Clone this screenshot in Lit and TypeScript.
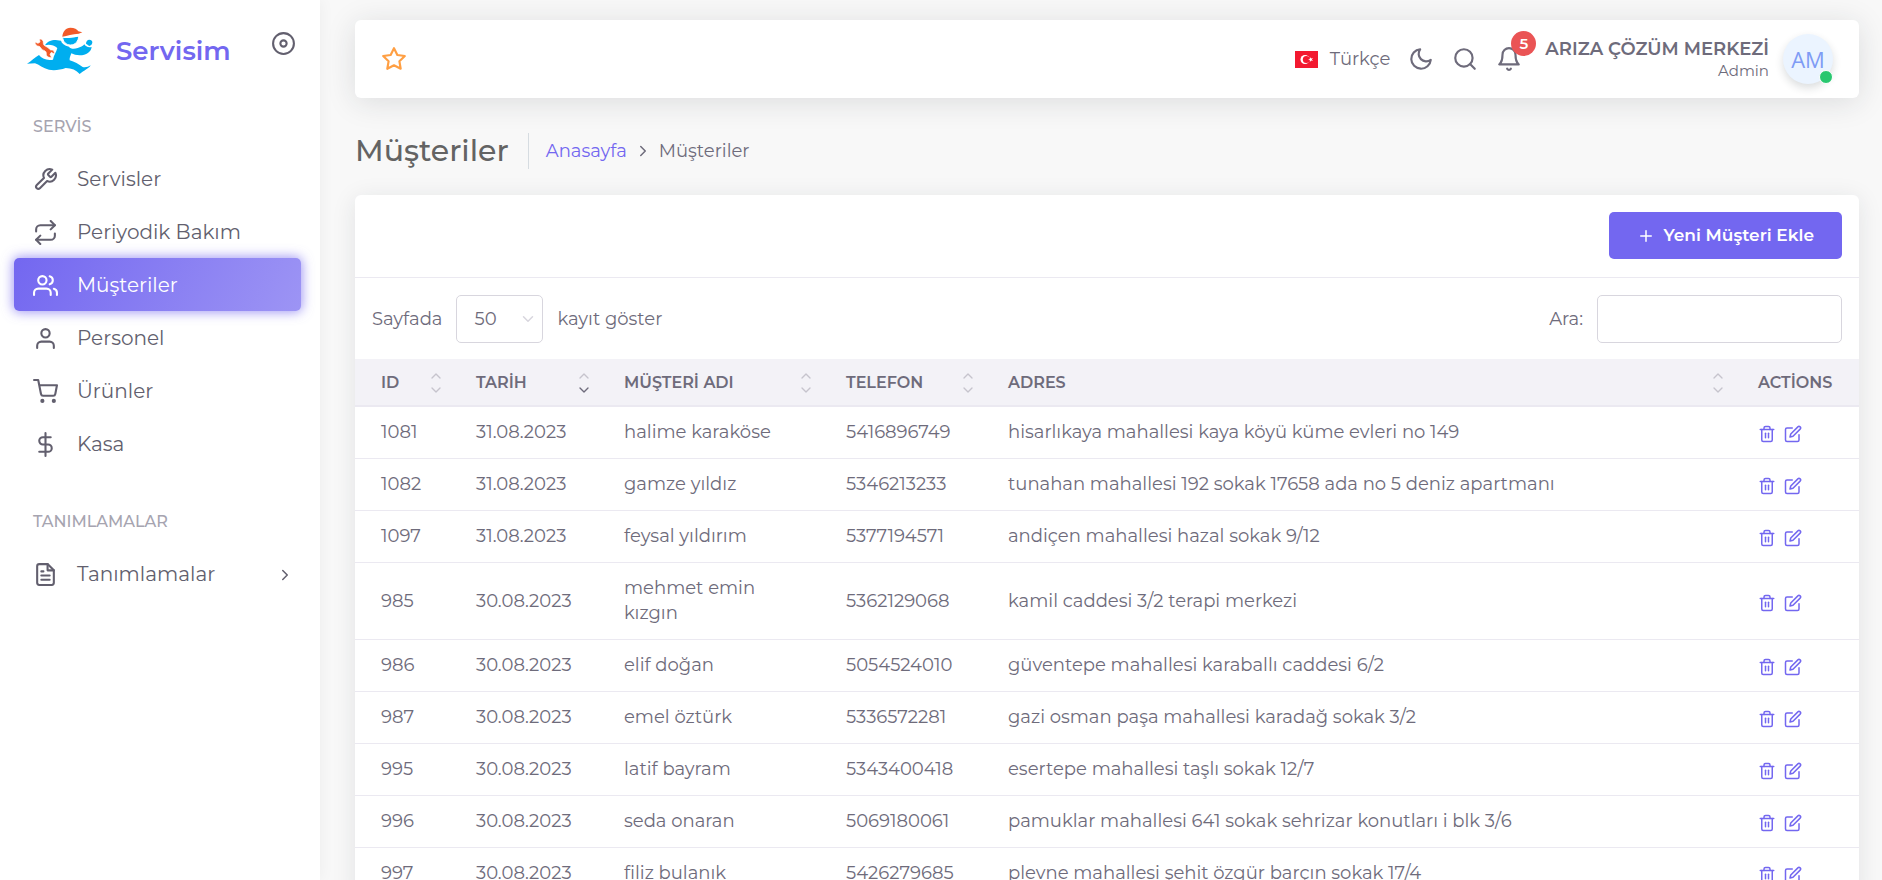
import { LitElement, html, css, svg } from "lit";
import { customElement, property, state } from "lit/decorators.js";
import { classMap } from "lit/directives/class-map.js";

const ICONS: Record<string, unknown> = {
  tool: svg`<path d="M14.7 6.3a1 1 0 0 0 0 1.4l1.6 1.6a1 1 0 0 0 1.4 0l3.77-3.77a6 6 0 0 1-7.94 7.94l-6.91 6.91a2.12 2.12 0 0 1-3-3l6.91-6.91a6 6 0 0 1 7.94-7.94l-3.76 3.76z"/>`,
  repeat: svg`<polyline points="17 1 21 5 17 9"/><path d="M3 11V9a4 4 0 0 1 4-4h14"/><polyline points="7 23 3 19 7 15"/><path d="M21 13v2a4 4 0 0 1-4 4H3"/>`,
  users: svg`<path d="M17 21v-2a4 4 0 0 0-4-4H5a4 4 0 0 0-4 4v2"/><circle cx="9" cy="7" r="4"/><path d="M23 21v-2a4 4 0 0 0-3-3.87"/><path d="M16 3.13a4 4 0 0 1 0 7.75"/>`,
  user: svg`<path d="M20 21v-2a4 4 0 0 0-4-4H8a4 4 0 0 0-4 4v2"/><circle cx="12" cy="7" r="4"/>`,
  cart: svg`<circle cx="9" cy="21" r="1"/><circle cx="20" cy="21" r="1"/><path d="M1 1h4l2.68 13.39a2 2 0 0 0 2 1.61h9.72a2 2 0 0 0 2-1.61L23 6H6"/>`,
  dollar: svg`<line x1="12" y1="1" x2="12" y2="23"/><path d="M17 5H9.5a3.5 3.5 0 0 0 0 7h5a3.5 3.5 0 0 1 0 7H6"/>`,
  file: svg`<path d="M14 2H6a2 2 0 0 0-2 2v16a2 2 0 0 0 2 2h12a2 2 0 0 0 2-2V8z"/><polyline points="14 2 14 8 20 8"/><line x1="16" y1="13" x2="8" y2="13"/><line x1="16" y1="17" x2="8" y2="17"/><polyline points="10 9 9 9 8 9"/>`,
  right: svg`<polyline points="9 18 15 12 9 6"/>`,
  down: svg`<polyline points="6 9 12 15 18 9"/>`,
  up: svg`<polyline points="18 15 12 9 6 15"/>`,
  disc: svg`<circle cx="12" cy="12" r="10"/><circle cx="12" cy="12" r="3"/>`,
  star: svg`<polygon points="12 2 15.09 8.26 22 9.27 17 14.14 18.18 21.02 12 17.77 5.82 21.02 7 14.14 2 9.27 8.91 8.26 12 2"/>`,
  moon: svg`<path d="M21 12.79A9 9 0 1 1 11.21 3 7 7 0 0 0 21 12.79z"/>`,
  search: svg`<circle cx="11" cy="11" r="8"/><line x1="21" y1="21" x2="16.65" y2="16.65"/>`,
  bell: svg`<path d="M18 8A6 6 0 0 0 6 8c0 7-3 9-3 9h18s-3-2-3-9"/><path d="M13.73 21a2 2 0 0 1-3.46 0"/>`,
  plus: svg`<line x1="12" y1="5" x2="12" y2="19"/><line x1="5" y1="12" x2="19" y2="12"/>`,
  trash: svg`<polyline points="3 6 5 6 21 6"/><path d="M19 6v14a2 2 0 0 1-2 2H7a2 2 0 0 1-2-2V6m3 0V4a2 2 0 0 1 2-2h4a2 2 0 0 1 2 2v2"/><line x1="10" y1="11" x2="10" y2="17"/><line x1="14" y1="11" x2="14" y2="17"/>`,
  edit: svg`<path d="M11 4H4a2 2 0 0 0-2 2v14a2 2 0 0 0 2 2h14a2 2 0 0 0 2-2v-7"/><path d="M18.5 2.5a2.121 2.121 0 0 1 3 3L12 15l-4 1 1-4 9.5-9.5z"/>`,
};

const icon = (name: string, size: number) => html`<svg
  class="icon" width=${size} height=${size} viewBox="0 0 24 24" fill="none"
  stroke="currentColor" stroke-width="2" stroke-linecap="round" stroke-linejoin="round"
  aria-hidden="true">${ICONS[name]}</svg>`;

const reset = css`
  *, *::before, *::after { box-sizing: border-box; }
  .icon { display: block; flex: none; }
  a { color: inherit; text-decoration: none; }
  button { font: inherit; color: inherit; background: none; border: 0; padding: 0; cursor: pointer; }
`;

@customElement("side-menu")
class SideMenu extends LitElement {
  static styles = [reset, css`
    :host {
      display: block; flex: none; width: 320px; background: #fff; color: #625f6e;
      box-shadow: 0 0 15px rgba(34, 41, 47, 0.05); z-index: 1;
    }
    .brand { display: flex; align-items: center; padding: 27px 24px 0 27px; }
    .brand-link { display: flex; align-items: center; gap: 23px; }
    .brand-name { font-size: 26px; line-height: 48px; font-weight: 600; color: #7367f0; }
    .toggle { margin: 0 0 16px auto; }
    .heading {
      margin: 41px 33px 14px; font-size: 16px; line-height: 22px; font-weight: 500; color: #a6a4b0;
    }
    .list { list-style: none; margin: 0; padding: 0 19px 0 14px; }
    .item {
      display: flex; align-items: center; gap: 19px; height: 53px; padding: 0 7px 0 19px;
      border-radius: 5px; font-size: 20px; line-height: 28px;
    }
    .item .icon { margin-top: 2px; }
    .label { flex: 1; }
    .active {
      color: #fff;
      background: linear-gradient(118deg, #7367f0, rgba(115, 103, 240, 0.7));
      box-shadow: 0 0 12px 1px rgba(115, 103, 240, 0.7);
    }
  `];

  @property({ attribute: false }) groups: { title: string; items: { icon: string; label: string; sub?: boolean }[] }[] = [
    {
      title: "SERVİS",
      items: [
        { icon: "tool", label: "Servisler" },
        { icon: "repeat", label: "Periyodik Bakım" },
        { icon: "users", label: "Müşteriler" },
        { icon: "user", label: "Personel" },
        { icon: "cart", label: "Ürünler" },
        { icon: "dollar", label: "Kasa" },
      ],
    },
    { title: "TANIMLAMALAR", items: [{ icon: "file", label: "Tanımlamalar", sub: true }] },
  ];

  @state() active = "Müşteriler";

  render() {
    return html`
      <div class="brand">
        <a class="brand-link" href="#">
          <svg width="66" height="48" viewBox="80 83 198 144" aria-hidden="true">
            <g fill="#00aeef">
              <path d="M134 138C140 127 152 122 166 122L182 124C184 132 192 138 206 142C210 149 222 150 232 146C240 144 248 140 252 135C256 141 262 145 274 143C272 158 258 168 238 168C228 168 220 165 213 162C210 170 207 176 208 183C222 186 236 196 247 203C255 206 264 202 271 198C268 206 250 214 238 224C228 212 214 206 196 206C180 212 160 214 146 211C128 207 116 196 104 192L80 193C92 186 104 174 116 167C124 178 138 184 158 181C160 168 168 158 171 146C160 138 148 134 134 138Z"/>
              <path d="M257 133c0-7 4-12 10-12 7 0 11 6 8 12-2 4-5 6-9 7-3-4-6-5-9-7z"/>
            </g>
            <path fill="#00aeef" stroke="#fff" stroke-width="3" d="M187 112c0 15 10 25 24 25s24-12 24-27c-14 4-32 3-48 2z"/>
            <path fill="#fff" d="M188 113c15 0 32-3 45-7l2 4c-14 5-31 7-46 6z"/>
            <path fill="#f15a29" d="M186 112c1-15 10-27 24-27 12 0 21 5 24 11l12 3-11 4c-19 1-34 6-49 9z"/>
            <path fill="#f15a29" stroke="#fff" stroke-width="2" d="M117 119c8-1 13 5 12 13 0 6 5 8 11 11 8 4 8 10 13 9 7-1 10 6 9 12l-9-5-4 6 5 10c-10 0-17-4-16-13 0-7-6-8-12-11-6-4-5-9-10-10-7-1-12-5-12-13l9 4 6-4z"/>
          </svg>
          <span class="brand-name">Servisim</span>
        </a>
        <button class="toggle" aria-label="Menüyü sabitle">${icon("disc", 25)}</button>
      </div>
      ${this.groups.map((g) => html`
        <div class="heading">${g.title}</div>
        <ul class="list">
          ${g.items.map((i) => html`<li>
            <a class=${classMap({ item: true, active: i.label === this.active })} href="#"
              @click=${() => (this.active = i.label)}>
              ${icon(i.icon, 25)}<span class="label">${i.label}</span>${i.sub ? icon("right", 18) : ""}
            </a>
          </li>`)}
        </ul>`)}
    `;
  }
}

@customElement("top-bar")
class TopBar extends LitElement {
  static styles = [reset, css`
    :host {
      display: flex; align-items: center; justify-content: space-between; height: 78px;
      padding: 0 26px; background: #fff; color: #6e6b7b; border-radius: 6px;
      box-shadow: 0 4px 30px rgba(34, 41, 47, 0.13);
    }
    .star { color: #ff9f43; }
    .tools { display: flex; align-items: center; gap: 18px; }
    .lang { display: flex; align-items: center; gap: 12px; font-size: 18px; line-height: 24px; }
    .bell { position: relative; margin-right: 5px; }
    .badge {
      position: absolute; top: -15px; right: -14px; width: 25px; height: 25px; border-radius: 50%;
      background: #ea5455; color: #fff; font-size: 15px; line-height: 25px; font-weight: 600; text-align: center;
    }
    .account { display: flex; align-items: center; gap: 14px; }
    .who { display: flex; flex-direction: column; align-items: flex-end; gap: 3px; }
    .name { font-size: 18px; line-height: 20px; font-weight: 600; }
    .role { font-size: 15px; line-height: 18px; }
    .avatar {
      position: relative; width: 50px; height: 50px; border-radius: 50%; background: #ebf4ff; color: #7f9cf5;
      font: 22px/50px "Open Sans", sans-serif; text-align: center;
      box-shadow: 0 4px 8px rgba(34, 41, 47, 0.16);
    }
    .status {
      position: absolute; right: 0; bottom: 0; width: 14px; height: 14px; border-radius: 50%;
      background: #28c76f; border: 1px solid #fff;
    }
  `];

  render() {
    return html`
      <button class="star" aria-label="Yer imi">${icon("star", 26)}</button>
      <div class="tools">
        <button class="lang">
          <svg width="23" height="17" viewBox="0 0 23 17" aria-hidden="true">
            <rect width="23" height="17" fill="#f31930"/>
            <circle cx="10" cy="8.5" r="4.5" fill="#fff"/>
            <circle cx="11.3" cy="8.5" r="3.5" fill="#f31930"/>
            <path fill="#fff" d="M13 8.5l1.9-.6v-2l1.2 1.6 1.9-.6-1.2 1.6 1.2 1.6-1.9-.6-1.2 1.6v-2z"/>
          </svg>
          Türkçe
        </button>
        <button aria-label="Karanlık tema">${icon("moon", 26)}</button>
        <button aria-label="Arama">${icon("search", 26)}</button>
        <button class="bell" aria-label="Bildirimler">${icon("bell", 26)}<span class="badge">5</span></button>
        <a class="account" href="#">
          <span class="who"><span class="name">ARIZA ÇÖZÜM MERKEZİ</span><span class="role">Admin</span></span>
          <span class="avatar">AM<span class="status"></span></span>
        </a>
      </div>
    `;
  }
}

type Row = [string, string, string, string, string];

@customElement("customer-table")
class CustomerTable extends LitElement {
  static styles = [reset, css`
    :host {
      display: block; background: #fff; color: #6e6b7b; border-radius: 6px; font-size: 18px; line-height: 25px;
      box-shadow: 0 4px 24px rgba(34, 41, 47, 0.1);
    }
    .head { display: flex; justify-content: flex-end; padding: 17px 17px 18px; border-bottom: 1px solid #ebe9f1; }
    .add {
      display: flex; align-items: center; gap: 9px; height: 47px; padding: 0 28px; border-radius: 5px;
      background: #7367f0; color: #fff; font-size: 17px; font-weight: 600;
    }
    .controls { display: flex; align-items: center; justify-content: space-between; padding: 17px 17px 16px; }
    .field { display: flex; align-items: center; gap: 14px; }
    .pick { display: grid; align-items: center; }
    .pick > * { grid-area: 1 / 1; }
    .pick .icon { justify-self: end; margin-right: 6px; color: #d8d6de; pointer-events: none; }
    .select, .search {
      height: 48px; font: inherit; color: inherit; background: #fff; border: 1px solid #d8d6de; border-radius: 5px;
    }
    .select { appearance: none; width: 87px; padding: 0 17px; }
    .search { width: 245px; padding: 0 17px; }
    .table { width: 100%; table-layout: fixed; border-collapse: separate; border-spacing: 0; }
    .table th {
      height: 48px; padding: 2px 6px 0 26px; background: #f3f2f7; border-bottom: 2px solid #ebe9f1;
      font-size: 16px; line-height: 20px; font-weight: 600; text-align: left; white-space: nowrap;
    }
    .th { display: flex; align-items: center; justify-content: space-between; }
    .sort { display: flex; flex-direction: column; color: #c6c4cd; }
    .sort .icon { margin: -1px 0; }
    .sort .on { color: #6e6b7b; }
    .table td { padding: 13px 26px; border-bottom: 1px solid #ebe9f1; }
    .id { width: 95px; } .date { width: 148px; } .name { width: 222px; } .phone { width: 162px; } .act { width: 127px; }
    .table .num { padding-right: 0; }
    .links { display: flex; gap: 8px; color: #7367f0; padding-top: 3px; }
  `];

  @property({ attribute: false }) rows: Row[] = [
    ["1081", "31.08.2023", "halime karaköse", "5416896749", "hisarlıkaya mahallesi kaya köyü küme evleri no 149"],
    ["1082", "31.08.2023", "gamze yıldız", "5346213233", "tunahan mahallesi 192 sokak 17658 ada no 5 deniz apartmanı"],
    ["1097", "31.08.2023", "feysal yıldırım", "5377194571", "andiçen mahallesi hazal sokak 9/12"],
    ["985", "30.08.2023", "mehmet emin kızgın", "5362129068", "kamil caddesi 3/2 terapi merkezi"],
    ["986", "30.08.2023", "elif doğan", "5054524010", "güventepe mahallesi karaballı caddesi 6/2"],
    ["987", "30.08.2023", "emel öztürk", "5336572281", "gazi osman paşa mahallesi karadağ sokak 3/2"],
    ["995", "30.08.2023", "latif bayram", "5343400418", "esertepe mahallesi taşlı sokak 12/7"],
    ["996", "30.08.2023", "seda onaran", "5069180061", "pamuklar mahallesi 641 sokak sehrizar konutları i blk 3/6"],
    ["997", "30.08.2023", "filiz bulanık", "5426279685", "plevne mahallesi şehit özgür barçın sokak 17/4"],
  ];

  columns = [
    { key: "id", label: "ID" },
    { key: "date", label: "TARİH", sorted: true },
    { key: "name", label: "MÜŞTERİ ADI" },
    { key: "phone", label: "TELEFON" },
    { key: "address", label: "ADRES" },
  ];

  render() {
    return html`
      <div class="head"><button class="add">${icon("plus", 18)}Yeni Müşteri Ekle</button></div>
      <div class="controls">
        <div class="field">
          <label for="size">Sayfada</label>
          <span class="pick">
            <select class="select" id="size">
              <option>10</option><option>25</option><option selected>50</option><option>100</option>
            </select>
            ${icon("down", 18)}
          </span>
          <label for="size">kayıt göster</label>
        </div>
        <div class="field">
          <label for="query">Ara:</label>
          <input class="search" id="query" type="search" />
        </div>
      </div>
      <table class="table">
        <thead>
          <tr>
            ${this.columns.map((c) => html`<th class=${c.key} scope="col">
              <span class="th">${c.label}
                <span class="sort">${icon("up", 16)}<span class=${classMap({ on: !!c.sorted })}>${icon("down", 16)}</span></span>
              </span>
            </th>`)}
            <th class="act" scope="col">ACTİONS</th>
          </tr>
        </thead>
        <tbody>
          ${this.rows.map(([id, date, name, phone, address]) => html`<tr>
            <td class="num">${id}</td><td class="num">${date}</td><td>${name}</td><td class="num">${phone}</td><td>${address}</td>
            <td><span class="links">
              <a href="#" aria-label="Sil">${icon("trash", 18)}</a>
              <a href="#" aria-label="Düzenle">${icon("edit", 18)}</a>
            </span></td>
          </tr>`)}
        </tbody>
      </table>
    `;
  }
}

@customElement("app-root")
class AppRoot extends LitElement {
  static styles = [reset, css`
    :host {
      display: flex; height: 100vh; overflow: hidden; background: #f8f8f8; color: #6e6b7b;
      font-family: Montserrat, Inter, sans-serif;
    }
    .main { flex: 1; min-width: 0; overflow-y: auto; scrollbar-width: none; padding: 20px 23px 40px 35px; }
    .title-row { display: flex; align-items: center; height: 36px; margin: 35px 0 26px; }
    .title {
      margin: 0; padding-right: 19px; border-right: 1px solid #d6dce1; font-size: 30px; line-height: 36px;
      font-weight: 500; color: #636363;
    }
    .crumbs { display: flex; align-items: center; gap: 7px; padding-left: 17px; font-size: 18px; line-height: 25px; }
    .home { color: #7367f0; }
  `];

  render() {
    return html`
      <side-menu></side-menu>
      <main class="main">
        <top-bar></top-bar>
        <div class="title-row">
          <h1 class="title">Müşteriler</h1>
          <nav class="crumbs"><a class="home" href="#">Anasayfa</a>${icon("right", 18)}<span>Müşteriler</span></nav>
        </div>
        <customer-table></customer-table>
      </main>
    `;
  }
}
